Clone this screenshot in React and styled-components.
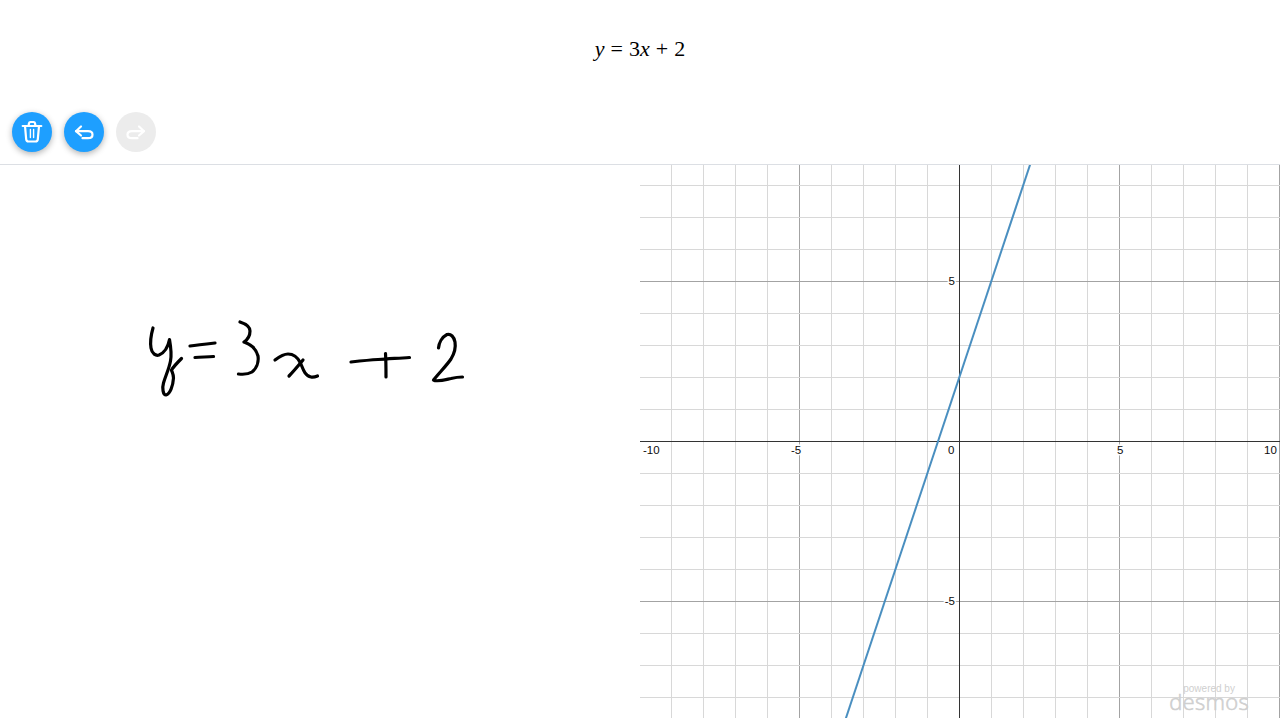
import React from 'react';
import styled, { createGlobalStyle } from 'styled-components';

const GlobalStyle = createGlobalStyle`
html, body {
  margin: 0;
  padding: 0;
  background-color: #fff;
  font-family: "Liberation Sans", Arial, sans-serif;
}
`;

const Page = styled.div`
display: flex;
flex-direction: column;
width: 1280px;
height: 720px;
overflow: hidden;
background-color: #fff;
`;

const Header = styled.div`
display: flex;
flex-direction: column;
height: 164px;
border-bottom: 1px solid #dcdfe4;
`;

const FormulaRow = styled.div`
display: flex;
align-items: center;
justify-content: center;
height: 98px;
font-family: "Liberation Serif", "Times New Roman", serif;
font-size: 22px;
color: #000;
`;

const Var = styled.span`
font-style: italic;
`;

const Op = styled.span`
margin: 0 ${(props) => props.$space};
`;

const Toolbar = styled.div`
display: flex;
gap: 12px;
padding: 14px 12px 12px 12px;
`;

const RoundButton = styled.button`
display: flex;
align-items: center;
justify-content: center;
width: 40px;
height: 40px;
padding: 0;
border: 0;
border-radius: 50%;
background-color: ${(props) => (props.disabled ? '#ececec' : '#1e9fff')};
box-shadow: ${(props) => (props.disabled ? 'none' : '0 2px 6px rgba(0, 0, 0, 0.3)')};
`;

const Icon = styled.svg`
width: 24px;
height: 24px;
fill: none;
stroke: #fff;
stroke-width: 2.2;
stroke-linecap: round;
stroke-linejoin: round;
`;

const Workspace = styled.div`
display: grid;
grid-template-columns: 640px 640px;
height: 553px;
`;

const InkPane = styled.div`
height: 553px;
`;

const Drawing = styled.svg`
display: block;
width: 640px;
height: 553px;
`;

const Stroke = styled.path`
fill: none;
stroke: #000;
stroke-width: 3.2;
stroke-linecap: round;
stroke-linejoin: round;
`;

const GraphPane = styled.div`
position: relative;
height: 553px;
`;

const TickLabel = styled.text`
font-family: "Liberation Sans", Arial, sans-serif;
font-size: 11.5px;
fill: #000;
opacity: 0.95;
paint-order: stroke;
stroke: #fff;
stroke-width: 3px;
`;

const Watermark = styled.div`
position: absolute;
right: 31px;
bottom: 10px;
display: flex;
flex-direction: column;
align-items: center;
color: #cfcfcf;
`;

const PoweredBy = styled.div`
font-family: "Liberation Sans", Arial, sans-serif;
font-size: 10px;
line-height: 10px;
`;

const Brand = styled.div`
font-family: "Open Sans", sans-serif;
font-size: 22px;
font-weight: 300;
line-height: 14px;
letter-spacing: 0.3px;
-webkit-text-stroke: 0.6px #cfcfcf;
`;

// handwritten strokes, in page coordinates
const inkStrokes = [
  'M153 328 C151 335 150 342 151 348 C152 354 156 356 159 355 C164 353 168 347 169.5 339.5 C171 348 171.5 356 170.5 361 C169 369 165.5 376 163.5 383 C162 388 163 395 166 395 C170 394 173 386 173.5 378 C173.5 374 172 372 171.5 370 C174 366 178 362 181.5 358.5',
  'M190 346 C197 345 206 344 215 343',
  'M195 357.5 C201 357 207 357 213.5 356.5',
  'M240 322 C246 324 250 327 250 331 C250 336 247 340 244 342 C250 344 256 348 258 356 C259 363 256 369 252 372 C248 374.5 243 374.5 238.5 374',
  'M275 360 C279 357 283 354 288 354 C294 354 298 358 300.5 363 C303 369 305 376 311 377 C313 377.5 315 377 317.5 376',
  'M303 360 C298 366 293 372 289 376',
  'M351 362 C360 361 369 360 378 359.5 C389 359 399 358 409.5 357.5',
  'M385.5 353.5 C386 361 386 369 386 377',
  'M438.5 348 C439 343 442 337 447 334.5 C451 333.5 454 337 455 342 C456 348 454 354 451 359 C447 365 440 372 433.5 380 C437 382 444 380 451 378.5 C455 377.5 459 377 462.5 377',
];

const Y_AXIS = 959.5;
const X_AXIS = 441.5;
const UNIT = 32;
const TOP = 165;
const BOTTOM = 718;

function gridLines() {
  const lines = [];
  for (let i = -10; i <= 10; i += 1) {
    if (i !== 0) {
      const x = Y_AXIS + i * UNIT;
      const isMajor = i % 5 === 0;
      lines.push(<line key={`v${i}`} x1={x} x2={x} y1={TOP} y2={BOTTOM} stroke={isMajor ? '#a3a3a3' : '#d8d8d8'} strokeWidth="1" />);
    }
  }
  for (let i = -8; i <= 8; i += 1) {
    if (i !== 0) {
      const y = X_AXIS - i * UNIT;
      const isMajor = i % 5 === 0;
      lines.push(<line key={`h${i}`} x1="640" x2="1280" y1={y} y2={y} stroke={isMajor ? '#a3a3a3' : '#d8d8d8'} strokeWidth="1" />);
    }
  }
  return lines;
}

function Graph() {
  const xTicks = [
    { text: '-10', x: 643 },
    { text: '-5', x: 791 },
    { text: '0', x: 948 },
    { text: '5', x: 1117 },
    { text: '10', x: 1264 },
  ];
  const yTicks = [
    { text: '5', y: 285 },
    { text: '-5', y: 605 },
  ];
  return (
    <Drawing viewBox="640 165 640 553">
      {gridLines()}
      <line x1={Y_AXIS} x2={Y_AXIS} y1={TOP} y2={BOTTOM} stroke="#333" strokeWidth="1" />
      <line x1="640" x2="1280" y1={X_AXIS} y2={X_AXIS} stroke="#333" strokeWidth="1" />
      {xTicks.map((t) => <TickLabel key={t.text} x={t.x} y="454">{t.text}</TickLabel>)}
      {yTicks.map((t) => <TickLabel key={t.text} x="955" y={t.y} textAnchor="end">{t.text}</TickLabel>)}
      <line x1="1031.3" x2="845.3" y1="161" y2="720" stroke="#4a8fc0" strokeWidth="2" />
    </Drawing>
  );
}

function App() {
  return (
    <Page>
      <GlobalStyle />
      <Header>
        <FormulaRow>
          <Var>y</Var>
          <Op $space="6px">=</Op>
          <span>3</span>
          <Var>x</Var>
          <Op $space="6px">+</Op>
          <span>2</span>
        </FormulaRow>
        <Toolbar>
          <RoundButton aria-label="clear">
            <Icon viewBox="0 0 24 24">
              <path d="M2.7 6H21.3" />
              <path d="M8.5 6L9 3.2Q9.2 2 10.4 2H13.6Q14.8 2 15 3.2L15.5 6" />
              <path d="M5 6L6.2 19.4Q6.4 21.5 8.5 21.5H15.5Q17.6 21.5 17.8 19.4L19 6" />
              <path d="M10.4 9.5V17.5M13.6 9.5V17.5" strokeWidth="1.4" />
            </Icon>
          </RoundButton>
          <RoundButton aria-label="undo">
            <Icon viewBox="0 0 24 24">
              <path d="M9 6.5L4 11.2L9 15.5" />
              <path d="M4 11.2H16Q20.5 11.2 20.5 14.7Q20.5 18.2 16 18.2H10.5" />
            </Icon>
          </RoundButton>
          <RoundButton aria-label="redo" disabled>
            <Icon viewBox="0 0 24 24">
              <path d="M15 6.5L20 11.2L15 15.5" />
              <path d="M20 11.2H8Q3.5 11.2 3.5 14.7Q3.5 18.2 8 18.2H13.5" />
            </Icon>
          </RoundButton>
        </Toolbar>
      </Header>
      <Workspace>
        <InkPane>
          <Drawing viewBox="0 165 640 553">
            {inkStrokes.map((d) => <Stroke key={d} d={d} />)}
          </Drawing>
        </InkPane>
        <GraphPane>
          <Graph />
          <Watermark>
            <PoweredBy>powered by</PoweredBy>
            <Brand>desmos</Brand>
          </Watermark>
        </GraphPane>
      </Workspace>
    </Page>
  );
}

export default App;
